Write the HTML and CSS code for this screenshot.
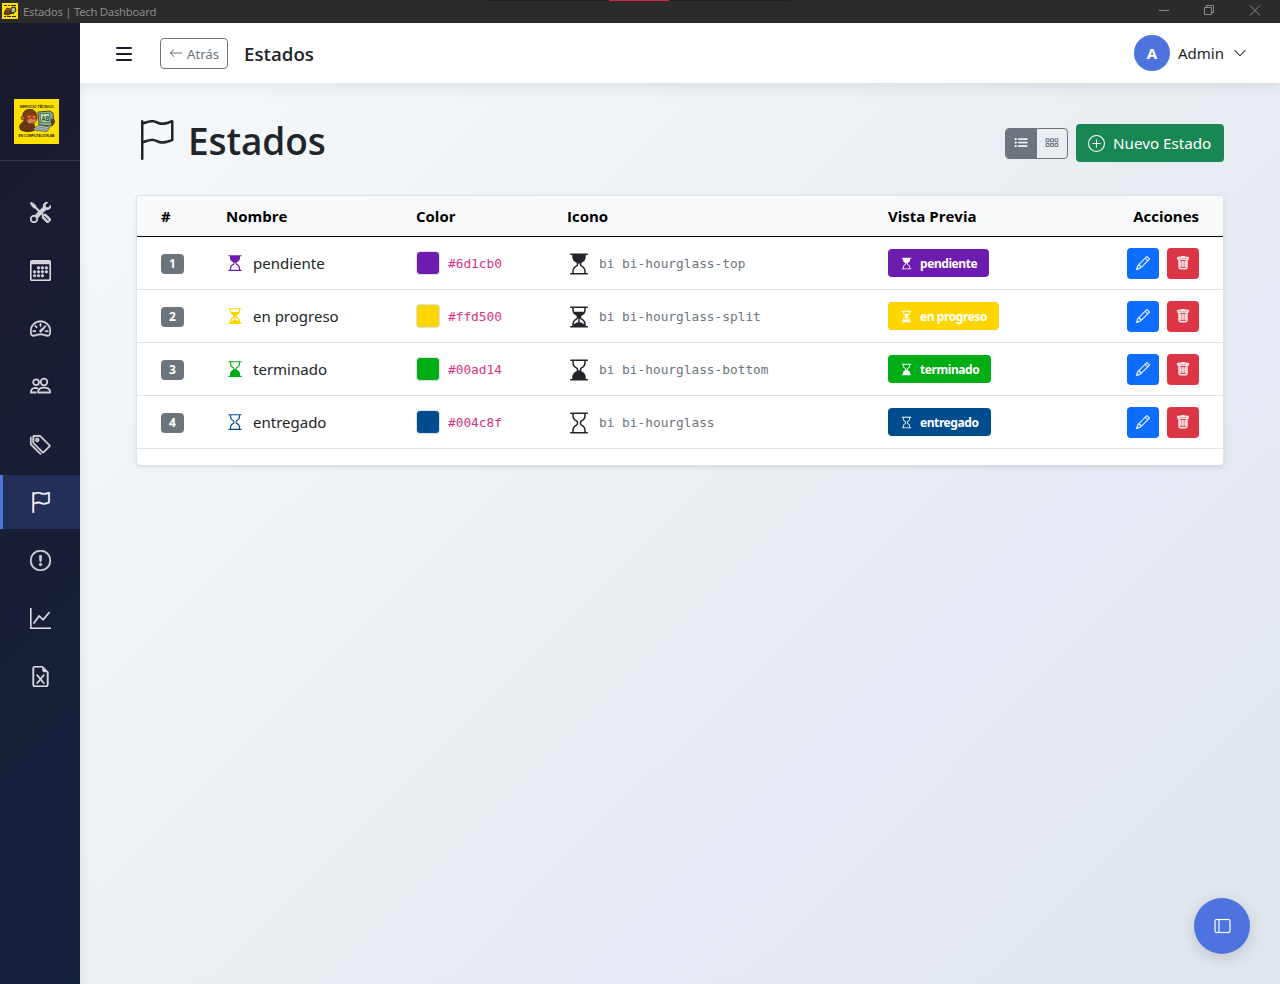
FILE: index.html
```html
<!DOCTYPE html>
<html lang="es">
<head>
<meta charset="utf-8">
<title>Estados | Tech Dashboard</title>
<link rel="stylesheet" href="styles.css">
</head>
<body>
<svg class="sprite" aria-hidden="true">
  <symbol id="arrow-left" viewBox="0 0 16 16"><path d="M15 8a.5.5 0 0 0-.5-.5H2.707l3.147-3.146a.5.5 0 1 0-.708-.708l-4 4a.5.5 0 0 0 0 .708l4 4a.5.5 0 0 0 .708-.708L2.707 8.5H14.5A.5.5 0 0 0 15 8"/></symbol>
  <symbol id="flag" viewBox="0 0 16 16"><path d="M14.778.085A.5.5 0 0 1 15 .5V8a.5.5 0 0 1-.314.464l-.009.004-.023.009a12 12 0 0 1-.397.15c-.264.095-.631.223-1.047.35-.816.252-1.879.523-2.71.523-.847 0-1.548-.28-2.158-.525l-.028-.01C7.68 8.71 7.14 8.5 6.5 8.5c-.7 0-1.638.23-2.437.477A20 20 0 0 0 3 9.342V15.5a.5.5 0 0 1-1 0V.5a.5.5 0 0 1 1 0v.282c.226-.079.496-.17.79-.26C4.606.272 5.67 0 6.5 0c.84 0 1.524.277 2.121.519l.043.018C9.286.788 9.828 1 10.5 1c.7 0 1.638-.23 2.437-.477a20 20 0 0 0 1.349-.476zM14 1.221c-.22.078-.48.167-.766.255-.81.252-1.872.523-2.734.523-.886 0-1.592-.286-2.203-.534l-.008-.003C7.662 1.21 7.139 1 6.5 1c-.669 0-1.606.229-2.415.478A21 21 0 0 0 3 1.845v6.433c.22-.078.48-.167.766-.255C4.576 7.77 5.638 7.5 6.5 7.5c.847 0 1.548.28 2.158.525l.028.01C9.32 8.29 9.86 8.5 10.5 8.5c.668 0 1.606-.229 2.415-.478A21 21 0 0 0 14 7.655z" fill-rule="evenodd"/></symbol>
  <symbol id="tools" viewBox="0 0 16 16"><path d="M1 0 0 1l2.2 3.081a1 1 0 0 0 .815.419h.07a1 1 0 0 1 .708.293l2.675 2.675-2.617 2.654A3.003 3.003 0 0 0 0 13a3 3 0 1 0 5.878-.851l2.654-2.617.968.968-.305.914a1 1 0 0 0 .242 1.023l3.27 3.27a.997.997 0 0 0 1.414 0l1.586-1.586a.997.997 0 0 0 0-1.414l-3.27-3.27a1 1 0 0 0-1.023-.242L10.5 9.5l-.96-.96 2.68-2.643A3.005 3.005 0 0 0 16 3q0-.405-.102-.777l-2.14 2.141L12 4l-.364-1.757L13.777.102a3 3 0 0 0-3.675 3.68L7.462 6.46 4.793 3.793a1 1 0 0 1-.293-.707v-.071a1 1 0 0 0-.419-.814zm9.646 10.646a.5.5 0 0 1 .708 0l2.914 2.915a.5.5 0 0 1-.707.707l-2.915-2.914a.5.5 0 0 1 0-.708M3 11l.471.242.529.026.287.445.445.287.026.529L5 13l-.242.471-.026.529-.445.287-.287.445-.529.026L3 15l-.471-.242L2 14.732l-.287-.445L1.268 14l-.026-.529L1 13l.242-.471.026-.529.445-.287.287-.445.529-.026z"/></symbol>
  <symbol id="calendar" viewBox="0 0 16 16"><path d="M14 0H2a2 2 0 0 0-2 2v12a2 2 0 0 0 2 2h12a2 2 0 0 0 2-2V2a2 2 0 0 0-2-2M1 3.857C1 3.384 1.448 3 2 3h12c.552 0 1 .384 1 .857v10.286c0 .473-.448.857-1 .857H2c-.552 0-1-.384-1-.857z"/><circle cx="6.5" cy="6" r="1"/><circle cx="9.5" cy="6" r="1"/><circle cx="12.5" cy="6" r="1"/><circle cx="3.5" cy="9" r="1"/><circle cx="6.5" cy="9" r="1"/><circle cx="9.5" cy="9" r="1"/><circle cx="12.5" cy="9" r="1"/><circle cx="3.5" cy="12" r="1"/><circle cx="6.5" cy="12" r="1"/><circle cx="9.5" cy="12" r="1"/></symbol>
  <symbol id="speedometer" viewBox="0 0 16 16"><path d="M8 4a.5.5 0 0 1 .5.5V6a.5.5 0 0 1-1 0V4.5A.5.5 0 0 1 8 4M3.732 5.732a.5.5 0 0 1 .707 0l.915.914a.5.5 0 1 1-.708.708l-.914-.915a.5.5 0 0 1 0-.707M2 10a.5.5 0 0 1 .5-.5h1.586a.5.5 0 0 1 0 1H2.5A.5.5 0 0 1 2 10m9.5 0a.5.5 0 0 1 .5-.5h1.5a.5.5 0 0 1 0 1H12a.5.5 0 0 1-.5-.5m.754-4.246a.39.39 0 0 0-.527-.02L7.547 9.31a.91.91 0 1 0 1.302 1.258l3.434-4.297a.39.39 0 0 0-.029-.518z"/><path fill-rule="evenodd" d="M0 10a8 8 0 1 1 15.547 2.661c-.442 1.253-1.845 1.602-2.932 1.25C11.309 13.488 9.475 13 8 13c-1.474 0-3.31.488-4.615.911-1.087.352-2.49.003-2.932-1.25A8 8 0 0 1 0 10m8-7a7 7 0 0 0-6.603 9.329c.203.575.923.876 1.68.63C4.397 12.533 6.358 12 8 12s3.604.532 4.923.96c.757.245 1.477-.056 1.68-.631A7 7 0 0 0 8 3"/></symbol>
  <symbol id="people" viewBox="0 0 21 21"><g fill="none" stroke="currentColor" stroke-width="1.8"><circle cx="6.1" cy="6.3" r="2.9"/><circle cx="14" cy="6" r="3.300"/><path d="M8 16.500c0-3 2.300-4.800 6-4.800s6.200 1.800 6.200 4.800z M6.500 16.500H.9c0-2.600 1.500-4.500 4.300-4.600 1.200 0 2 .2 2.900.7" stroke-linejoin="round"/></g></symbol>
  <symbol id="tags" viewBox="0 0 16 16"><path d="M3 2v4.586l7 7L14.586 9l-7-7zM2 2a1 1 0 0 1 1-1h4.586a1 1 0 0 1 .707.293l7 7a1 1 0 0 1 0 1.414l-4.586 4.586a1 1 0 0 1-1.414 0l-7-7A1 1 0 0 1 2 6.586z" fill-rule="evenodd"/><path d="M5.500 5a.5.5 0 1 1 0-1 .5.5 0 0 1 0 1m0 1a1.500 1.500 0 1 0 0-3 1.500 1.500 0 0 0 0 3M1 7.086a1 1 0 0 0 .293.707L8.750 15.250l-.043.043a1 1 0 0 1-1.414 0l-7-7A1 1 0 0 1 0 7.586V3a1 1 0 0 1 1-1z"/></symbol>
  <symbol id="alert" viewBox="0 0 16 16"><path d="M8 15A7 7 0 1 1 8 1a7 7 0 0 1 0 14m0 1A8 8 0 1 0 8 0a8 8 0 0 0 0 16"/><path d="M7.002 11a1 1 0 1 1 2 0 1 1 0 0 1-2 0M7.100 4.995a.905.905 0 1 1 1.800 0l-.35 3.507a.552.552 0 0 1-1.100 0z"/></symbol>
  <symbol id="graph" viewBox="0 0 16 16"><path d="M0 0h1v15h15v1H0zm14.817 3.113a.5.5 0 0 1 .07.704l-4.500 5.500a.5.5 0 0 1-.74.037L7.060 6.767l-3.656 5.027a.5.5 0 0 1-.808-.588l4-5.500a.5.5 0 0 1 .758-.06l2.609 2.610 4.150-5.073a.5.5 0 0 1 .704-.07"/></symbol>
  <symbol id="excel" viewBox="0 0 16 16"><path d="M5.884 6.680a.5.5 0 1 0-.768.64L7.349 10l-2.233 2.680a.5.5 0 0 0 .768.64L8 10.781l2.116 2.540a.5.5 0 0 0 .768-.641L8.651 10l2.233-2.680a.5.5 0 0 0-.768-.64L8 9.219l-2.116-2.540z"/><path d="M14 14V4.500L9.500 0H4a2 2 0 0 0-2 2v12a2 2 0 0 0 2 2h8a2 2 0 0 0 2-2M9.500 3A1.500 1.500 0 0 0 11 4.500h2V14a1 1 0 0 1-1 1H4a1 1 0 0 1-1-1V2a1 1 0 0 1 1-1h5.500z"/></symbol>
  <symbol id="chevron" viewBox="0 0 16 16"><path d="M1.646 4.646a.5.5 0 0 1 .708 0L8 10.293l5.646-5.647a.5.5 0 0 1 .708.708l-6 6a.5.5 0 0 1-.708 0l-6-6a.5.5 0 0 1 0-.708"/></symbol>
  <symbol id="list-ul" viewBox="0 0 16 16"><path d="M5 3h10v1H5zM5 7h10v1H5zM5 11h10v1H5z" stroke="currentColor" stroke-width=".8"/><circle cx="2" cy="3.500" r="1.300"/><circle cx="2" cy="7.500" r="1.300"/><circle cx="2" cy="11.500" r="1.300"/></symbol>
  <symbol id="grid" viewBox="0 0 16 16"><g fill="none" stroke="currentColor" stroke-width="1.200"><rect x="1.200" y="3.200" width="3.300" height="3.300" rx=".3"/><rect x="6.300" y="3.200" width="3.300" height="3.300" rx=".3"/><rect x="11.400" y="3.200" width="3.300" height="3.300" rx=".3"/><rect x="1.200" y="8.700" width="3.300" height="3.300" rx=".3"/><rect x="6.300" y="8.700" width="3.300" height="3.300" rx=".3"/><rect x="11.400" y="8.700" width="3.300" height="3.300" rx=".3"/></g></symbol>
  <symbol id="plus" viewBox="0 0 16 16"><path d="M8 15A7 7 0 1 1 8 1a7 7 0 0 1 0 14m0 1A8 8 0 1 0 8 0a8 8 0 0 0 0 16"/><path d="M8 4a.5.5 0 0 1 .5.5v3h3a.5.5 0 0 1 0 1h-3v3a.5.5 0 0 1-1 0v-3h-3a.5.5 0 0 1 0-1h3v-3A.5.5 0 0 1 8 4"/></symbol>
  <symbol id="hg-top" viewBox="0 0 16 16"><path id="hgt" d="M2 14.500a.5.5 0 0 0 .5.5h11a.5.5 0 1 0 0-1h-1v-1a4.500 4.500 0 0 0-2.557-4.060c-.29-.139-.443-.377-.443-.59v-.7c0-.213.154-.451.443-.59A4.500 4.500 0 0 0 12.500 3V2h1a.5.5 0 0 0 0-1h-11a.5.5 0 0 0 0 1h1v1a4.500 4.500 0 0 0 2.557 4.060c.29.139.443.377.443.59v.7c0 .213-.154.451-.443.59A4.500 4.500 0 0 0 3.500 13v1h-1a.5.5 0 0 0-.5.5m2.500-.5v-1a3.500 3.500 0 0 1 1.989-3.158c.533-.256 1.011-.79 1.011-1.491v-.702s.18.101.5.101.5-.1.5-.1v.7c0 .701.478 1.236 1.011 1.492A3.500 3.500 0 0 1 11.500 13v1z" fill-rule="evenodd"/></symbol>
  <symbol id="hg-bottom" viewBox="0 0 16 16"><use href="#hgt" transform="matrix(1 0 0 -1 0 16)"/></symbol>
  <symbol id="hg-split" viewBox="0 0 16 16"><path fill-rule="evenodd" d="M2.500 15a.5.5 0 1 1 0-1h1v-1a4.500 4.500 0 0 1 2.557-4.060c.29-.139.443-.377.443-.59v-.7c0-.213-.154-.451-.443-.59A4.500 4.500 0 0 1 3.500 3V2h-1a.5.5 0 0 1 0-1h11a.5.5 0 0 1 0 1h-1v1a4.500 4.500 0 0 1-2.557 4.060c-.29.139-.443.377-.443.59v.7c0 .213.154.451.443.59A4.500 4.500 0 0 1 12.500 13v1h1a.5.5 0 0 1 0 1zm2-13v1c0 .537.12 1.045.337 1.500h6.326c.216-.455.337-.963.337-1.500V2zm3 6.350c0 .701-.478 1.236-1.011 1.492A3.500 3.500 0 0 0 4.500 13s.866-1.299 3-1.480zm1 0v3.170c2.134.181 3 1.480 3 1.480a3.500 3.500 0 0 0-1.989-3.158C8.978 9.586 8.500 9.052 8.500 8.351z"/></symbol>
  <symbol id="hg" viewBox="0 0 16 16"><path fill-rule="evenodd" d="M2 1.500a.5.5 0 0 1 .5-.5h11a.5.5 0 0 1 0 1h-1v1a4.500 4.500 0 0 1-2.557 4.060c-.29.139-.443.377-.443.59v.7c0 .213.154.451.443.59A4.500 4.500 0 0 1 12.500 13v1h1a.5.5 0 0 1 0 1h-11a.5.5 0 1 1 0-1h1v-1a4.500 4.500 0 0 1 2.557-4.060c.29-.139.443-.377.443-.59v-.7c0-.213-.154-.451-.443-.59A4.500 4.500 0 0 1 3.500 3V2h-1a.5.5 0 0 1-.5-.5m2.500.5v1a3.500 3.500 0 0 0 1.989 3.158c.533.256 1.011.791 1.011 1.491v.702c0 .7-.478 1.235-1.011 1.491A3.500 3.500 0 0 0 4.500 13v1h7v-1a3.500 3.500 0 0 0-1.989-3.158C8.978 9.586 8.500 9.052 8.500 8.351v-.702c0-.7.478-1.235 1.011-1.491A3.500 3.500 0 0 0 11.500 3V2z"/></symbol>
  <symbol id="pencil" viewBox="0 0 16 16"><path fill-rule="evenodd" d="M12.146.146a.5.5 0 0 1 .708 0l3 3a.5.5 0 0 1 0 .708l-10 10a.5.5 0 0 1-.168.11l-5 2a.5.5 0 0 1-.65-.65l2-5a.5.5 0 0 1 .11-.168zM11.207 2.500 13.500 4.793 14.793 3.500 12.500 1.207zm1.586 3L10.500 3.207 4 9.707V10h.5a.5.5 0 0 1 .5.5v.5h.5a.5.5 0 0 1 .5.5v.5h.293zm-9.761 5.175-.106.106-1.528 3.821 3.821-1.528.106-.106A.5.5 0 0 1 5 12.500V12h-.5a.5.5 0 0 1-.5-.5V11h-.5a.5.5 0 0 1-.468-.325"/></symbol>
  <symbol id="trash" viewBox="0 0 16 16"><path d="M5.500 5.500A.5.5 0 0 1 6 6v6a.5.5 0 0 1-1 0V6a.5.5 0 0 1 .5-.5m2.500 0a.5.5 0 0 1 .5.5v6a.5.5 0 0 1-1 0V6a.5.5 0 0 1 .5-.5m3 .5a.5.5 0 0 0-1 0v6a.5.5 0 0 0 1 0z"/><path fill-rule="evenodd" d="M14.500 3a1 1 0 0 1-1 1H13v9a2 2 0 0 1-2 2H5a2 2 0 0 1-2-2V4h-.5a1 1 0 0 1-1-1V2a1 1 0 0 1 1-1H6a1 1 0 0 1 1-1h2a1 1 0 0 1 1 1h3.500a1 1 0 0 1 1 1zM4.118 4 4 4.059V13a1 1 0 0 0 1 1h6a1 1 0 0 0 1-1V4.059L11.882 4zM2.500 3h11V2h-11z"/></symbol>
  <symbol id="sidebar-icon" viewBox="0 0 16 16"><path fill-rule="evenodd" d="M0 3a2 2 0 0 1 2-2h12a2 2 0 0 1 2 2v10a2 2 0 0 1-2 2H2a2 2 0 0 1-2-2zm5-1v12h9a1 1 0 0 0 1-1V3a1 1 0 0 0-1-1zM4 2H2a1 1 0 0 0-1 1v10a1 1 0 0 0 1 1h2z"/></symbol>
</svg>

<div class="titlebar">
  <svg class="favicon" viewBox="0 0 16 16"><rect width="16" height="16" fill="#ffe100"/><path d="M2 2.500h3M6 2.500h2M9 2.500h5M2 13.500h2M5 13.500h4M10 13.500h4" stroke="#292400"/><path d="M3 8l2-3 3 1 1 4-3 2-4-1z" fill="#743d14" stroke="#2a1a08" stroke-width=".8"/><path d="M4 6.500h4" stroke="#d74218"/><path d="M9 5l4-1 1 4-3 2-2-1z" fill="#a7c2a0" stroke="#222"/><path d="M7 11l4-1 1 1" stroke="#222" fill="none"/></svg>
  <span class="window-title">Estados | Tech Dashboard</span>
  <div class="overlay-strip"><i></i></div>
  <svg class="window-controls" viewBox="0 0 104 12"><g fill="none" stroke="#8a8a8a"><path d="M0 5.500h10M91 .5l10 10M101 .5l-10 10"/><path d="M45.500 2.500h7v7h-7zM47.500 2.500v-2h7v7h-2"/></g></svg>
</div>

<div class="app">
  <aside class="sidebar">
    <div class="brand">
      <svg viewBox="0 0 45 45">
        <rect width="45" height="45" fill="#ffe100"/>
        <path d="M7 31c-3-3-1-7 4-9l9 3 1 6c-4 2-10 2-14 0z" fill="#6b3512" stroke="#24170c" stroke-width=".7"/>
        <path d="M9 15c1-4 5-5 8-4.500 4 .5 6 4 6 8 0 4-3 7-6 7-5 0-9-4-8-10.500z" fill="#7a3d16" stroke="#2a190b" stroke-width=".7"/>
        <circle cx="9" cy="19" r="2" fill="#b76a32" stroke="#3a200d" stroke-width=".5"/>
        <ellipse cx="18" cy="22" rx="4.500" ry="3.300" fill="#d08a4c"/>
        <path d="M12 15.800l11 .5-1 3.500-4 .2-1-2-1 2-3.500-.4z" fill="#e3301c" stroke="#451" stroke-width=".5"/>
        <circle cx="15" cy="17.800" r=".8" fill="#ffc928"/><circle cx="20" cy="18" r=".8" fill="#ffc928"/>
        <path d="M15.500 24q2.500 1.200 4.500-.5" fill="none" stroke="#4a220c" stroke-width=".7"/>
        <path d="M24 13l12-1 3 2 1 10-2 3-13-1z" fill="#8cab91" stroke="#26342d" stroke-width=".8"/>
        <path d="M26 15l9.500-.6 1 8.600-9.500.5z" fill="#c4e3b5" stroke="#315040" stroke-width=".7"/>
        <path d="M37.500 20c4-1 4 5 0 6z" fill="#743b18" stroke="#2a190b" stroke-width=".5"/>
        <path d="M19 30l6-4 11 2-3 4.500-10-1z" fill="#abc2c0" stroke="#3d4b49" stroke-width=".7"/>
        <path d="M22 29.500l11 1.500M24 28l10 1.500" stroke="#5a6b69" stroke-width=".6"/>
        <g fill="#1d1a00" font-family="Liberation Sans, sans-serif" font-weight="700"><text x="5.500" y="9" font-size="4.200" textLength="34" lengthAdjust="spacingAndGlyphs">SERVICIO TÉCNICO</text><text x="4.500" y="38" font-size="4.200" textLength="36" lengthAdjust="spacingAndGlyphs">EN COMPUTACION AB</text><text x="27.500" y="21.500" font-size="6.500" textLength="8" lengthAdjust="spacingAndGlyphs" fill="#244a32">AB</text></g>
      </svg>
    </div>
    <nav>
      <a><svg><use href="#tools"/></svg></a>
      <a><svg><use href="#calendar"/></svg></a>
      <a><svg><use href="#speedometer"/></svg></a>
      <a><svg><use href="#people"/></svg></a>
      <a><svg><use href="#tags"/></svg></a>
      <a class="active"><svg><use href="#flag"/></svg></a>
      <a><svg><use href="#alert"/></svg></a>
      <a><svg><use href="#graph"/></svg></a>
      <a><svg><use href="#excel"/></svg></a>
    </nav>
  </aside>
  <div class="main">
    <header class="topbar">
      <div class="menu"><i></i><i></i><i></i></div>
      <div class="back"><svg><use href="#arrow-left"/></svg><span>Atrás</span></div>
      <div class="crumb">Estados</div>
      <div class="user"><b class="avatar">A</b><span>Admin</span><svg><use href="#chevron"/></svg></div>
    </header>
    <main class="content">
      <div class="heading">
        <svg><use href="#flag"/></svg><h1>Estados</h1>
        <div class="toggle"><span class="on"><svg><use href="#list-ul"/></svg></span><span><svg><use href="#grid"/></svg></span></div>
        <div class="create"><svg><use href="#plus"/></svg><span>Nuevo Estado</span></div>
      </div>
      <section class="card">
        <table>
          <colgroup><col class="c-num"><col class="c-name"><col class="c-color"><col class="c-icon"><col class="c-view"><col></colgroup>
          <thead><tr><th>#</th><th>Nombre</th><th>Color</th><th>Icono</th><th>Vista Previa</th><th>Acciones</th></tr></thead>
          <tbody>
            <tr class="purple"><td><b class="num">1</b></td><td><div class="cell name"><svg><use href="#hg-top"/></svg><span>pendiente</span></div></td><td><div class="cell color"><i></i><code>#6d1cb0</code></div></td><td><div class="cell icon"><svg><use href="#hg-top"/></svg><code>bi bi-hourglass-top</code></div></td><td><div class="badge"><svg><use href="#hg-top"/></svg><span>pendiente</span></div></td><td><div class="actions"><span><svg><use href="#pencil"/></svg></span><span class="del"><svg><use href="#trash"/></svg></span></div></td></tr>
            <tr class="yellow"><td><b class="num">2</b></td><td><div class="cell name"><svg><use href="#hg-split"/></svg><span>en progreso</span></div></td><td><div class="cell color"><i></i><code>#ffd500</code></div></td><td><div class="cell icon"><svg><use href="#hg-split"/></svg><code>bi bi-hourglass-split</code></div></td><td><div class="badge"><svg><use href="#hg-split"/></svg><span>en progreso</span></div></td><td><div class="actions"><span><svg><use href="#pencil"/></svg></span><span class="del"><svg><use href="#trash"/></svg></span></div></td></tr>
            <tr class="green"><td><b class="num">3</b></td><td><div class="cell name"><svg><use href="#hg-bottom"/></svg><span>terminado</span></div></td><td><div class="cell color"><i></i><code>#00ad14</code></div></td><td><div class="cell icon"><svg><use href="#hg-bottom"/></svg><code>bi bi-hourglass-bottom</code></div></td><td><div class="badge"><svg><use href="#hg-bottom"/></svg><span>terminado</span></div></td><td><div class="actions"><span><svg><use href="#pencil"/></svg></span><span class="del"><svg><use href="#trash"/></svg></span></div></td></tr>
            <tr class="blue"><td><b class="num">4</b></td><td><div class="cell name"><svg><use href="#hg"/></svg><span>entregado</span></div></td><td><div class="cell color"><i></i><code>#004c8f</code></div></td><td><div class="cell icon"><svg><use href="#hg"/></svg><code>bi bi-hourglass</code></div></td><td><div class="badge"><svg><use href="#hg"/></svg><span>entregado</span></div></td><td><div class="actions"><span><svg><use href="#pencil"/></svg></span><span class="del"><svg><use href="#trash"/></svg></span></div></td></tr>
          </tbody>
        </table>
      </section>
    </main>
  </div>
</div>
<div class="fab"><svg><use href="#sidebar-icon"/></svg></div>
</body>
</html>
```
FILE: styles.css
```css
* { box-sizing: border-box; }
body { margin: 0; height: 984px; overflow: hidden; display: flex; flex-direction: column; font-family: "Noto Sans", "Open Sans", sans-serif; font-size: 15px; line-height: 24px; color: #212529; }
svg { display: block; flex: none; fill: currentColor; }
.sprite { position: absolute; width: 0; height: 0; }

.titlebar { position: relative; flex: none; height: 23px; background: #2b2b2b; color: #8a8a8a; display: flex; align-items: center; padding: 0 20px 0 2px; }
.favicon { width: 16px; height: 16px; margin-top: -1px; }
.window-title { margin-left: 5px; font-size: 11.3px; letter-spacing: -.25px; line-height: 22px; white-space: nowrap; }
.window-controls { width: 104px; height: 12px; margin-left: auto; overflow: visible; margin-top: -2px; margin-right: -3px; }
.overlay-strip { position: absolute; top: 0; left: 489px; width: 301px; height: 1px; background: #1f1f1f; }
.overlay-strip i { display: block; width: 60px; height: 1px; margin-left: 120px; background: #cf2a3c; }

.app { flex: 1; display: flex; min-height: 0; }
.sidebar { width: 80px; flex: none; background: linear-gradient(135deg, #1a1a2e 0%, #16213e 100%); color: rgba(255,255,255,.8); }
.brand { height: 138px; padding: 76px 0 0 14px; border-bottom: 1px solid rgba(255,255,255,.1); }
.brand svg { width: 45px; height: 45px; }
nav { padding-top: 24px; display: flex; flex-direction: column; gap: 4px; }
nav a { height: 54px; display: flex; align-items: center; justify-content: center; border-left: 3px solid transparent; padding: 1px 3px 0 0; }
nav svg { width: 21px; height: 21px; stroke: currentColor; stroke-width: .4px; }
nav .active { background: rgba(78,115,223,.2); border-left-color: #4e73df; color: #fff; }

.main { flex: 1; min-width: 0; display: flex; flex-direction: column; background: linear-gradient(135deg, #f7fafc 0%, #e9eef2 52%, #e6eaf4 68%, #dfe6ed 100%); box-shadow: inset 8px 0 12px -8px rgba(0,0,0,.08); }
.topbar { height: 60px; flex: none; background: #fff; box-shadow: 0 2px 15px rgba(0,0,0,.1); display: flex; align-items: center; padding: 0 33px 0 36px; }
.menu { width: 16px; height: 14px; display: flex; flex-direction: column; justify-content: space-between; margin-top: 2px; }
.menu i { height: 2px; border-radius: 1px; background: #1a1a2e; }
.back { margin-left: 28px; width: 68px; height: 31px; border: 1px solid #6c757d; border-radius: 4px; color: #6c757d; font-size: 13.2px; display: flex; align-items: center; padding-left: 8px; gap: 4px; }
.back svg { width: 14px; height: 14px; }
.back span { padding-top: 1px; }
.crumb { margin-left: 16px; font-family: "Open Sans", sans-serif; font-weight: 600; font-size: 18.7px; padding-top: 1px; }
.user { margin-left: auto; display: flex; align-items: center; height: 36px; color: #212529; }
.avatar { width: 36px; height: 36px; border-radius: 50%; background: #4e73df; color: #fff; text-align: center; line-height: 37px; margin-right: 8px; }
.user svg { width: 14px; height: 14px; margin-left: 9px; }

.content { padding: 36px 56px 0; }
.heading { height: 48px; display: flex; align-items: center; }
.heading > svg { width: 40px; height: 40px; margin-top: -7px; }
h1 { margin: -4px auto 0 12px; font: 600 37px/48px "Open Sans", sans-serif; letter-spacing: -.1px; }
.toggle { width: 63px; height: 31px; border: 1px solid #6c757d; border-radius: 4px; overflow: hidden; display: flex; color: #6c757d; }
.toggle span { flex: 1; display: flex; align-items: center; justify-content: center; }
.toggle .on { background: #6c757d; color: #fff; }
.toggle svg { width: 14px; height: 14px; }
.create { width: 148px; height: 38px; margin-left: 8px; border-radius: 4px; background: #198754; color: #fff; display: flex; align-items: center; padding-left: 12px; font-size: 15.2px; white-space: nowrap; }
.create svg { width: 17px; height: 17px; margin-right: 8px; }

.card { margin-top: 28px; height: 270px; background: #fff; box-shadow: 0 2px 4px rgba(0,0,0,.1); border: 1px solid #dfe2e6; border-bottom: 0; border-radius: 4px; overflow: hidden; }
table { width: 100%; table-layout: fixed; border-collapse: separate; border-spacing: 0; }
.c-num { width: 81px; }
.c-name { width: 190px; }
.c-color { width: 151px; }
.c-icon { width: 321px; }
.c-view { width: 200px; }
th { height: 41px; padding: 0 8px; text-align: left; color: #000; background: #f8f9fb; border-bottom: 1px solid #000; font: 700 15px/24px "Open Sans", sans-serif; }
td { height: 53px; padding: 0 8px; border-bottom: 1px solid #dee2e6; }
th:first-child, td:first-child { padding-left: 24px; }
th:last-child, td:last-child { padding-right: 24px; text-align: right; }
.num { display: block; width: 23px; height: 20px; margin-top: 2px; border-radius: 4px; background: #6c757d; color: #fff; font-size: 12px; line-height: 20px; text-align: center; }
.cell { display: flex; align-items: center; }
.name svg { width: 18px; height: 18px; margin-right: 9px; color: var(--state); }
.color i { width: 24px; height: 24px; border: 1px solid #dee2e6; border-radius: 4px; background: var(--state); }
code { font: 12.8px/22px "DejaVu Sans Mono", monospace; padding-top: 2px; color: #6c757d; }
.color code { margin-left: 8px; color: #d63384; }
.icon svg { width: 24px; height: 24px; margin-right: 8px; margin-top: 1px; }
.badge { width: fit-content; height: 28px; padding: 0 12px; border-radius: 4px; background: var(--state); color: #fff; display: flex; align-items: center; font-size: 12px; letter-spacing: -.42px; font-weight: 700; }
.badge span { padding-top: 2px; }
.badge svg { width: 13px; height: 13px; margin-right: 7px; }
.actions { display: flex; justify-content: flex-end; gap: 8px; }
.actions span { width: 32px; height: 31px; border-radius: 4px; background: #0d6efd; color: #fff; display: flex; align-items: center; justify-content: center; }
.actions .del { background: #dc3545; }
.actions svg { width: 14px; height: 14px; stroke: currentColor; stroke-width: .3px; }
.actions .del svg { stroke-width: .6px; }
.purple { --state: #6d1cb0; }
.yellow { --state: #ffd500; }
.green { --state: #00ad14; }
.blue { --state: #004c8f; }

.fab { position: absolute; right: 30px; bottom: 30px; width: 56px; height: 56px; border-radius: 50%; background: #4e73df; color: #fff; display: flex; align-items: center; justify-content: center; box-shadow: 0 4px 15px rgba(0,0,0,.15); }
.fab svg { width: 17px; height: 16px; stroke: currentColor; stroke-width: .2px; }
```
